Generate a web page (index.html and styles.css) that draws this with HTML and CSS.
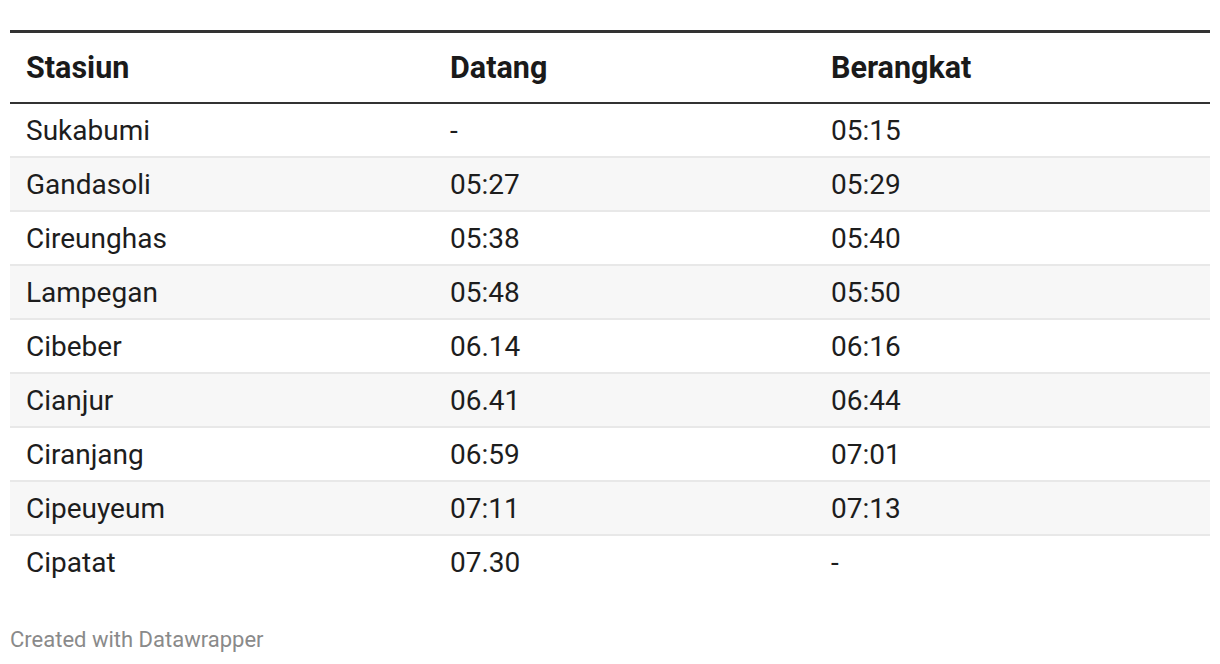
FILE: index.html
```html
<!DOCTYPE html>
<html lang="id">
<head>
<meta charset="utf-8">
<title>Jadwal</title>
<link rel="stylesheet" href="styles.css">
</head>
<body>
<div class="chart">
  <table class="schedule">
    <thead>
      <tr><th class="c1">Stasiun</th><th class="c2">Datang</th><th class="c3">Berangkat</th></tr>
    </thead>
    <tbody>
      <tr><td>Sukabumi</td><td>-</td><td>05:15</td></tr>
      <tr><td>Gandasoli</td><td>05:27</td><td>05:29</td></tr>
      <tr><td>Cireunghas</td><td>05:38</td><td>05:40</td></tr>
      <tr><td>Lampegan</td><td>05:48</td><td>05:50</td></tr>
      <tr><td>Cibeber</td><td>06.14</td><td>06:16</td></tr>
      <tr><td>Cianjur</td><td>06.41</td><td>06:44</td></tr>
      <tr><td>Ciranjang</td><td>06:59</td><td>07:01</td></tr>
      <tr><td>Cipeuyeum</td><td>07:11</td><td>07:13</td></tr>
      <tr><td>Cipatat</td><td>07.30</td><td>-</td></tr>
    </tbody>
  </table>
  <div class="footer">Created with Datawrapper</div>
</div>
</body>
</html>
```

FILE: styles.css
```css
html, body {
  margin: 0;
  padding: 0;
  background: #ffffff;
}
body {
  font-family: Roboto, "Liberation Sans", sans-serif;
  color: #1d1d1d;
}
.chart {
  padding: 30px 10px 0 10px;
}
.schedule {
  width: 1200px;
  border-collapse: collapse;
  table-layout: fixed;
  border-top: 3px solid #333333;
}
.schedule th,
.schedule td {
  text-align: left;
  padding: 0 0 0 16px;
  vertical-align: middle;
}
.c1 { width: 408px; }
.c2 { width: 365px; }
.c3 { width: 379px; }
.schedule th {
  font-size: 30.5px;
  font-weight: 700;
  color: #1a1a1a;
  height: 68px;
  line-height: 68px;
  padding-top: 1px;
  border-bottom: 2px solid #333333;
}
.schedule td {
  font-size: 28px;
  font-weight: 400;
  height: 50px;
  line-height: 50px;
  padding-top: 2px;
  border-bottom: 2px solid #e8e8e8;
}
.schedule tbody tr:nth-child(even) td {
  background: #f7f7f7;
}
.schedule tbody tr:last-child td {
  border-bottom: none;
}
.footer {
  margin-top: 40px;
  font-size: 22px;
  line-height: 24px;
  color: #8a8a8a;
}
```
